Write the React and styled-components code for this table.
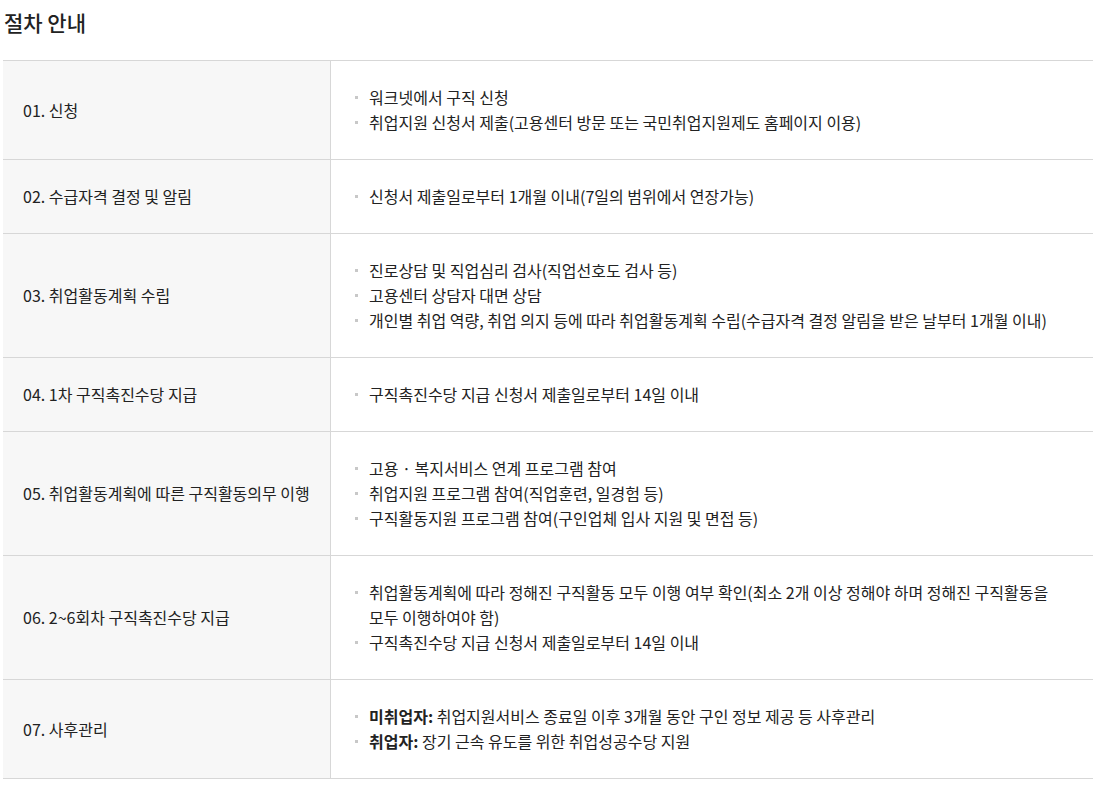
import styled, { createGlobalStyle } from "styled-components";

const GlobalStyle = createGlobalStyle`
  body {
    margin: 0;
    background: #fff;
    font-family: "Noto Sans CJK KR", "Noto Sans", sans-serif;
    color: #222;
  }
`;

const Wrapper = styled.div`
  padding: 0 4px 0 3px;
`;

const Title = styled.h2`
  margin: 0;
  padding: 8px 0 0 1px;
  height: 60px;
  box-sizing: border-box;
  font-size: 21px;
  font-weight: 500;
  line-height: 28px;
  color: #222;
`;

const Table = styled.div`
  border-top: 1px solid #d7d7d7;
  display: grid;
  grid-template-columns: 328px 1fr;
  word-break: keep-all;
`;

const Row = styled.div`
  display: contents;
`;

const Head = styled.div`
  background: #f7f7f7;
  border-bottom: 1px solid #d7d7d7;
  border-right: 1px solid #d7d7d7;
  padding: 0 10px 0 20px;
  display: flex;
  align-items: center;
  font-size: 16px;
  line-height: 25px;
`;

const Cell = styled.div`
  border-bottom: 1px solid #d7d7d7;
  padding: 24px 24px 24px 24px;
  font-size: 16px;
  line-height: 25px;
`;

const List = styled.ul`
  margin: 0;
  padding: 0;
  list-style: none;
`;

const Item = styled.li`
  position: relative;
  padding-left: 14px;
  &::before {
    content: "";
    position: absolute;
    left: 0;
    top: 11px;
    width: 3px;
    height: 3px;
    background: #c8c8c8;
  }
`;

const rows = [
  {
    title: "01. 신청",
    items: [
      "워크넷에서 구직 신청",
      "취업지원 신청서 제출(고용센터 방문 또는 국민취업지원제도 홈페이지 이용)",
    ],
  },
  {
    title: "02. 수급자격 결정 및 알림",
    items: ["신청서 제출일로부터 1개월 이내(7일의 범위에서 연장가능)"],
  },
  {
    title: "03. 취업활동계획 수립",
    items: [
      "진로상담 및 직업심리 검사(직업선호도 검사 등)",
      "고용센터 상담자 대면 상담",
      "개인별 취업 역량, 취업 의지 등에 따라 취업활동계획 수립(수급자격 결정 알림을 받은 날부터 1개월 이내)",
    ],
  },
  {
    title: "04. 1차 구직촉진수당 지급",
    items: ["구직촉진수당 지급 신청서 제출일로부터 14일 이내"],
  },
  {
    title: "05. 취업활동계획에 따른 구직활동의무 이행",
    items: [
      "고용 · 복지서비스 연계 프로그램 참여",
      "취업지원 프로그램 참여(직업훈련, 일경험 등)",
      "구직활동지원 프로그램 참여(구인업체 입사 지원 및 면접 등)",
    ],
  },
  {
    title: "06. 2~6회차 구직촉진수당 지급",
    items: [
      "취업활동계획에 따라 정해진 구직활동 모두 이행 여부 확인(최소 2개 이상 정해야 하며 정해진 구직활동을 모두 이행하여야 함)",
      "구직촉진수당 지급 신청서 제출일로부터 14일 이내",
    ],
  },
  {
    title: "07. 사후관리",
    items: [
      [<b key="b">미취업자:</b>, " 취업지원서비스 종료일 이후 3개월 동안 구인 정보 제공 등 사후관리"],
      [<b key="b">취업자:</b>, " 장기 근속 유도를 위한 취업성공수당 지원"],
    ],
  },
];

const App = () => {
  return (
    <Wrapper>
      <GlobalStyle />
      <Title>절차 안내</Title>
      <Table>
        {rows.map((r) => (
          <Row key={r.title}>
            <Head>{r.title}</Head>
            <Cell>
              <List>
                {r.items.map((it, i) => (
                  <Item key={i}>{it}</Item>
                ))}
              </List>
            </Cell>
          </Row>
        ))}
      </Table>
    </Wrapper>
  );
};

export default App;
